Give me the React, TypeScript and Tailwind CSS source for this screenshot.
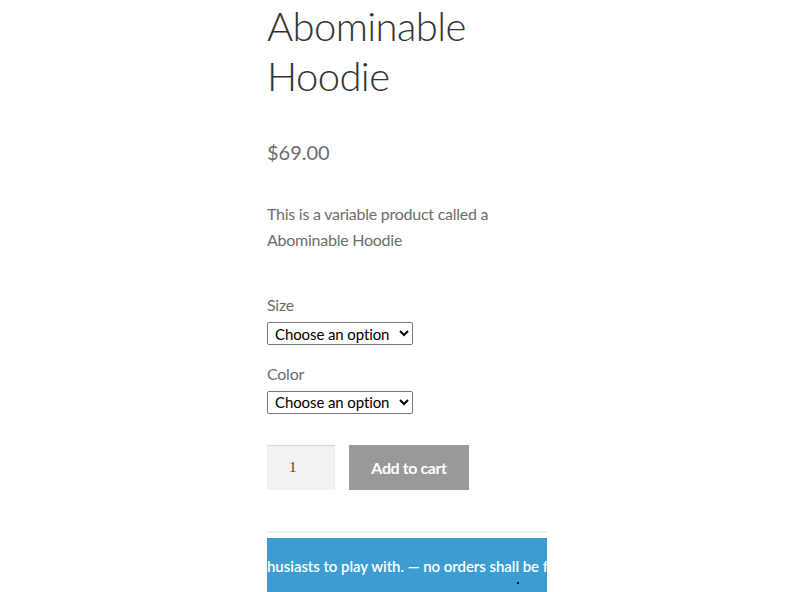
import React from 'react';

const sans = { fontFamily: 'Lato, "Noto Sans", sans-serif' };

function VariationSelect({ label }: { label: string }) {
  return (
    <div className="mb-[18px]">
      <label className="block text-[16px] leading-[20px] tracking-[-0.25px] text-[#6d6d6d]">{label}</label>
      <select
        className="mt-[7px] h-[23px] w-[146px] rounded-[2px] border border-[#767676] bg-white pl-[3px] text-[15px] leading-[20px] tracking-[-0.1px] text-black"
        defaultValue=""
        style={sans}
      >
        <option value="">Choose an option</option>
      </select>
    </div>
  );
}

export default function App() {
  return (
    <div className="min-h-[592px] w-full overflow-hidden bg-white" style={sans}>
      <div className="ml-[267px] w-[280px]">
        <h1 className="pt-[1px] text-[40px] font-light leading-[50px] tracking-[-0.6px] text-[#333333]">
          Abominable Hoodie
        </h1>

        <p className="mt-[38px] text-[20px] leading-[26px] text-[#6d6d6d]">$69.00</p>

        <p className="mt-[36px] text-[16px] leading-[26px] tracking-[-0.25px] text-[#6d6d6d]">
          This is a variable product called a Abominable Hoodie
        </p>

        <div className="mt-[42px]">
          <VariationSelect label="Size" />
          <VariationSelect label="Color" />
        </div>

        <div className="mt-[31px] flex gap-[14px]">
          <input
            type="number"
            defaultValue={1}
            className="h-[45px] w-[68px] bg-[#f2f2f2] pl-[22px] text-[15px] text-[#43454b] shadow-[inset_0_1px_1px_rgba(0,0,0,0.125)] outline-none"
            style={{ fontFamily: '"Liberation Serif", serif' }}
          />
          <button className="h-[45px] w-[120px] bg-[#999999] text-[16px] font-bold tracking-[-0.4px] text-white">
            Add to cart
          </button>
        </div>

        <div className="mt-[41px] border-t-2 border-[#eeeeee]" />

        {/* store notice, scrolled part way through */}
        <div className="relative mt-[5px] h-[54px] overflow-hidden bg-[#3d9cd2]">
          <p className="whitespace-nowrap pt-[16px] text-[15px] font-semibold leading-[24px] tracking-[-0.05px] text-white">
            husiasts to play with. — no orders shall be fulfilled.
          </p>
          <span className="absolute left-[250px] top-[44px] h-[2px] w-[2px] bg-[#111111]" />
        </div>
      </div>
    </div>
  );
}
